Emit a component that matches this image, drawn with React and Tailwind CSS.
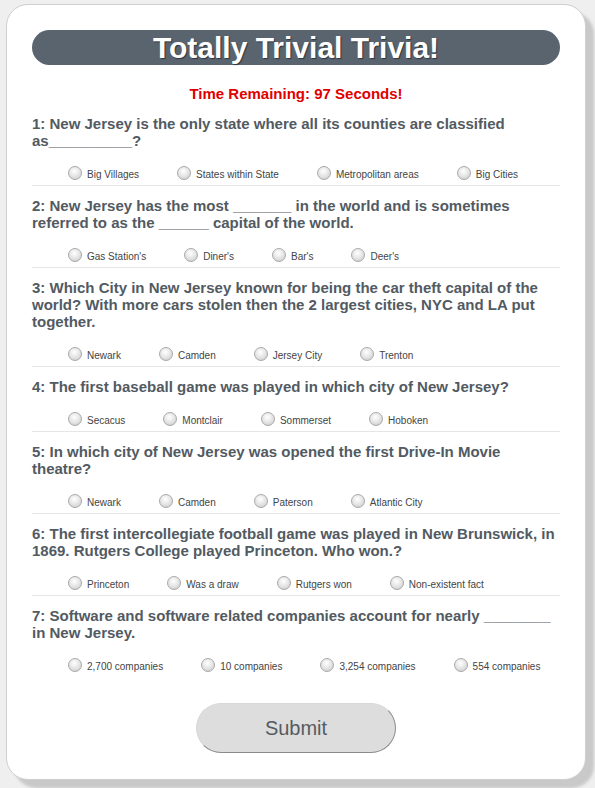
const questions = [
  {
    text: '1: New Jersey is the only state where all its counties are classified as__________?',
    options: ['Big Villages', 'States within State', 'Metropolitan areas', 'Big Cities'],
  },
  {
    text: '2: New Jersey has the most _______ in the world and is sometimes referred to as the ______ capital of the world.',
    options: ["Gas Station's", "Diner's", "Bar's", "Deer's"],
  },
  {
    text: '3: Which City in New Jersey known for being the car theft capital of the world? With more cars stolen then the 2 largest cities, NYC and LA put together.',
    options: ['Newark', 'Camden', 'Jersey City', 'Trenton'],
  },
  {
    text: '4: The first baseball game was played in which city of New Jersey?',
    options: ['Secacus', 'Montclair', 'Sommerset', 'Hoboken'],
  },
  {
    text: '5: In which city of New Jersey was opened the first Drive-In Movie theatre?',
    options: ['Newark', 'Camden', 'Paterson', 'Atlantic City'],
  },
  {
    text: '6: The first intercollegiate football game was played in New Brunswick, in 1869. Rutgers College played Princeton. Who won.?',
    options: ['Princeton', 'Was a draw', 'Rutgers won', 'Non-existent fact'],
  },
  {
    text: '7: Software and software related companies account for nearly ________ in New Jersey.',
    options: ['2,700 companies', '10 companies', '3,254 companies', '554 companies'],
  },
]

function Question({ q, index, last }) {
  return (
    <div className={last ? 'pt-[11px]' : 'border-b border-[#e6e6e6] pt-[11px] pb-[5px]'}>
      <h3 className="text-[15px] font-bold leading-[17px] text-[#525a62]">{q.text}</h3>
      <div className="mt-[17px] flex items-end gap-[38px] pl-[36px]">
        {q.options.map((opt) => (
          <label key={opt} className="flex items-end gap-[5px]">
            <input
              type="radio"
              name={`q${index}`}
              className="h-[14px] w-[14px] appearance-none rounded-full border border-[#a9a9a9] bg-[radial-gradient(circle_at_45%_35%,#ffffff_0%,#e2e2e2_55%,#c4c4c4_100%)]"
            />
            <span className="text-[10px] leading-[11px] text-[#444]">{opt}</span>
          </label>
        ))}
      </div>
    </div>
  )
}

export default function App() {
  return (
    <div className="h-[788px] overflow-hidden bg-[#efefef] pt-[4px] pl-[6px] font-['Liberation_Sans',Arial,sans-serif]">
      <div className="w-[580px] rounded-[22px] border border-[#cfcfcf] bg-white p-[25px] pb-[26px] shadow-[8px_8px_3px_#c9c9c9]">
        <div className="flex h-[35px] items-center justify-center rounded-full bg-[#59646f]">
          <h1 className="text-[30px] font-bold leading-none text-white [text-shadow:1px_1px_1px_#2d3640]">
            Totally Trivial Trivia!
          </h1>
        </div>

        <p className="mt-[21px] text-center text-[15px] font-bold leading-[16px] text-[#e00000]">
          Time Remaining: 97 Seconds!
        </p>

        <div className="mt-[2px]">
          {questions.map((q, i) => (
            <Question key={i} q={q} index={i} last={i === questions.length - 1} />
          ))}
        </div>

        <div className="mt-[31px] flex justify-center">
          <button
            type="button"
            className="h-[50px] w-[200px] rounded-full border border-[#d8d8d8] border-r-[#8a8a8a] border-b-[#8a8a8a] bg-[#dddddd] text-[20px] text-[#555b61]"
          >
            Submit
          </button>
        </div>
      </div>
    </div>
  )
}
